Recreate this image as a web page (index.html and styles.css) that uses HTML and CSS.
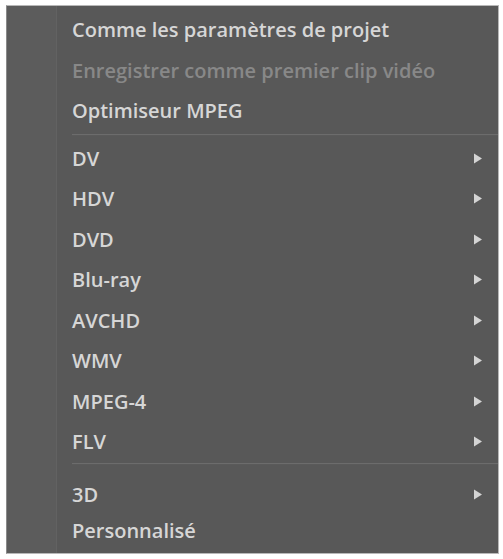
FILE: index.html
```html
<!DOCTYPE html>
<html lang="fr">
<head>
<meta charset="utf-8">
<title>Menu</title>
<link rel="stylesheet" href="styles.css">
</head>
<body>
<div class="menu">
  <div class="item">Comme les paramètres de projet</div>
  <div class="item disabled">Enregistrer comme premier clip vidéo</div>
  <div class="item">Optimiseur MPEG</div>
  <div class="sep"></div>
  <div class="item sub">DV<svg class="arrow" viewBox="0 0 8 10"><polygon points="0,0 8,5 0,10"/></svg></div>
  <div class="item sub">HDV<svg class="arrow" viewBox="0 0 8 10"><polygon points="0,0 8,5 0,10"/></svg></div>
  <div class="item sub">DVD<svg class="arrow" viewBox="0 0 8 10"><polygon points="0,0 8,5 0,10"/></svg></div>
  <div class="item sub">Blu-ray<svg class="arrow" viewBox="0 0 8 10"><polygon points="0,0 8,5 0,10"/></svg></div>
  <div class="item sub">AVCHD<svg class="arrow" viewBox="0 0 8 10"><polygon points="0,0 8,5 0,10"/></svg></div>
  <div class="item sub">WMV<svg class="arrow" viewBox="0 0 8 10"><polygon points="0,0 8,5 0,10"/></svg></div>
  <div class="item sub">MPEG-4<svg class="arrow" viewBox="0 0 8 10"><polygon points="0,0 8,5 0,10"/></svg></div>
  <div class="item sub">FLV<svg class="arrow" viewBox="0 0 8 10"><polygon points="0,0 8,5 0,10"/></svg></div>
  <div class="sep sep-last"></div>
  <div class="item sub">3D<svg class="arrow" viewBox="0 0 8 10"><polygon points="0,0 8,5 0,10"/></svg></div>
  <div class="item last">Personnalisé</div>
</div>
</body>
</html>
```

FILE: styles.css
```css
html, body {
  margin: 0;
  padding: 0;
  background: #ffffff;
}

body {
  padding: 5px 0 0 6px;
}

.menu {
  box-sizing: border-box;
  width: 493px;
  height: 549px;
  border: 1px solid #b8b8b8;
  border-left-color: #8a8a8a;
  padding-top: 3.5px;
  background: linear-gradient(to right, #5c5c5c 0, #5c5c5c 49px, #626262 49px, #626262 50px, #585858 50px);
  font-family: "Open Sans", "DejaVu Sans", sans-serif;
  font-size: 20px;
  font-weight: 600;
  color: #d6d6d6;
  display: flex;
  flex-direction: column;
}

.item {
  height: 40.5px;
  display: flex;
  align-items: center;
  padding-left: 65px;
  padding-right: 16px;
  flex-shrink: 0;
  white-space: nowrap;
}

.item.disabled {
  color: #888888;
}

.item.sub {
  justify-content: space-between;
}

.arrow {
  width: 8px;
  height: 11px;
  fill: #d4d4d4;
}

.sep {
  height: 1px;
  margin: 2.5px 0 2.5px 65px;
  background: #6c6c6c;
  border-bottom: 1px solid #5a5a5a;
  flex-shrink: 0;
}

.sep.sep-last {
  margin-top: 1px;
  margin-bottom: 9px;
}

.item.last {
  height: 32px;
}
```
